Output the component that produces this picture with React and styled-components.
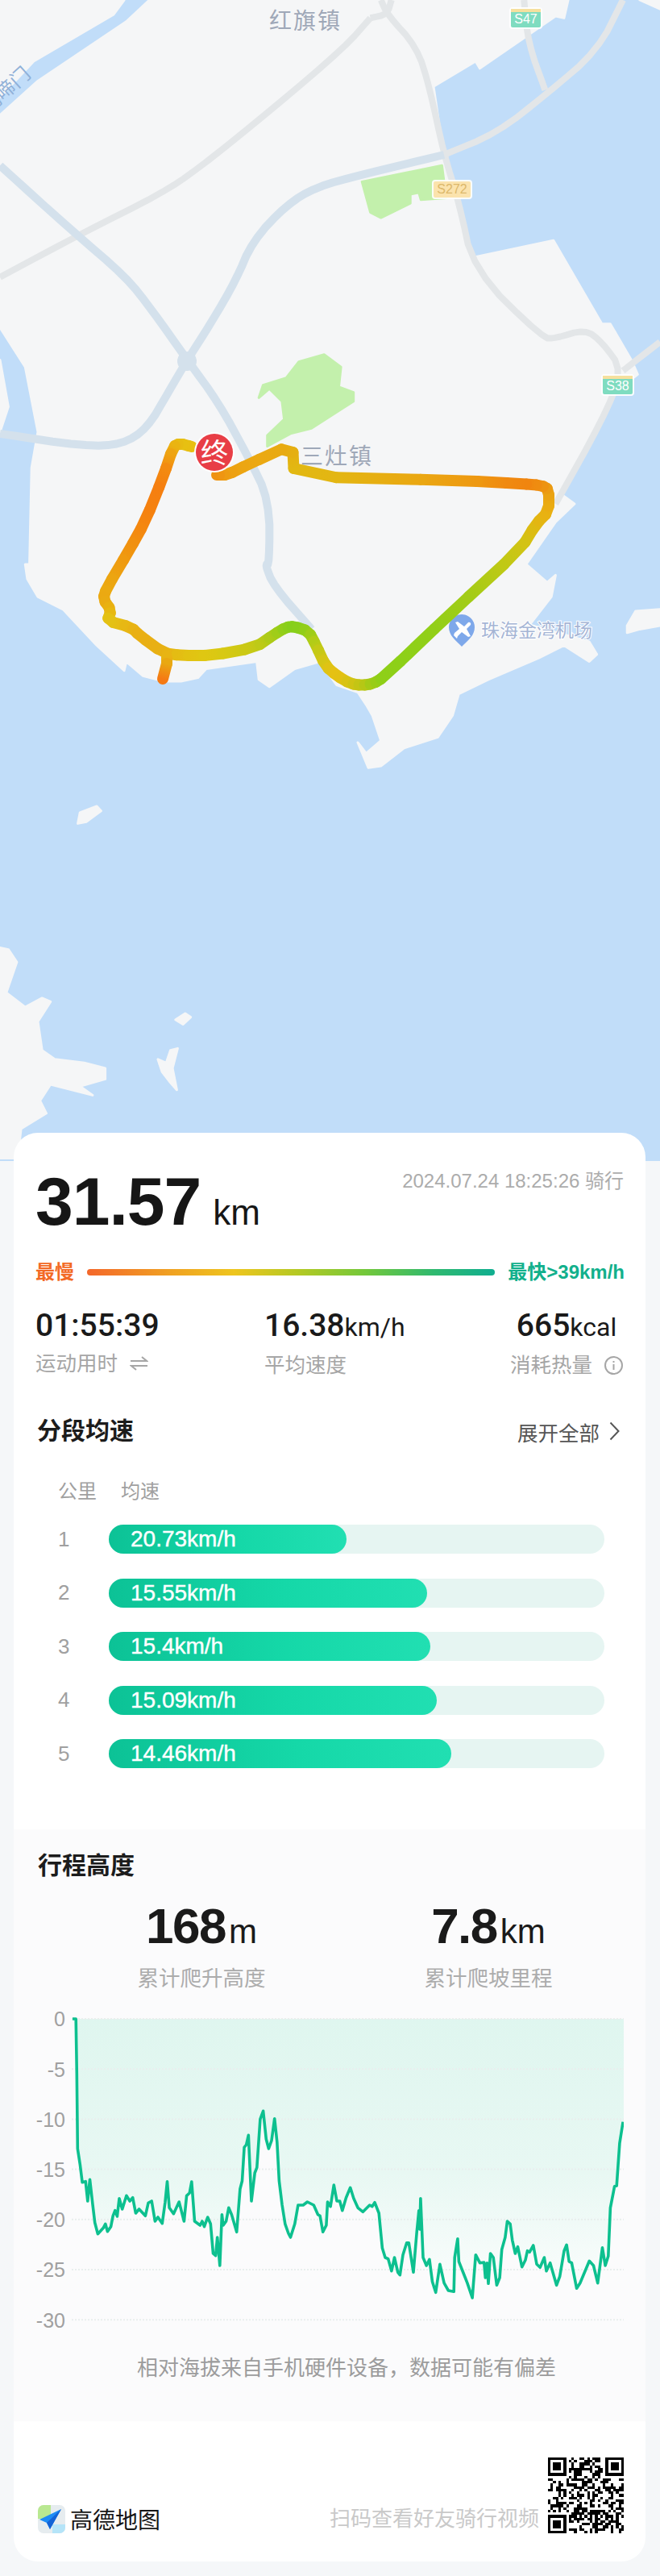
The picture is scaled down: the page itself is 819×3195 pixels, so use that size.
import styled, { createGlobalStyle } from 'styled-components';

const sans = '"Liberation Sans", "Noto Sans CJK SC", sans-serif';

// traced points come from crops of the reference, so they keep the crop scale here
const top = (pts) => pts.map(([x, y]) => [x * 0.5223, y * 0.4464]);
const low = (pts) => pts.map(([x, y]) => [x * 0.5223, 700 + y * 0.4464]);
const toPoints = (pts) => pts.map(([x, y]) => `${x.toFixed(1)},${y.toFixed(1)}`).join(' ');

const blend = (a, b, t) => {
  const ch = (hex, i) => parseInt(hex.slice(1 + i * 2, 3 + i * 2), 16);
  const out = [0, 1, 2].map((i) => Math.round(ch(a, i) + (ch(b, i) - ch(a, i)) * t).toString(16).padStart(2, '0'));
  return `#${out.join('')}`;
};

// corner cutting, so the traced lines read as curves
const smooth = (pts, rounds = 1) => {
  let line = pts;
  for (let r = 0; r < rounds; r++) {
    const next = [line[0]];
    for (let i = 0; i < line.length - 1; i++) {
      const a = line[i];
      const b = line[i + 1];
      [0.25, 0.75].forEach((t) => {
        const p = [a[0] + (b[0] - a[0]) * t, a[1] + (b[1] - a[1]) * t];
        if (a[2]) p.push(blend(a[2], b[2], t));
        next.push(p);
      });
    }
    next.push(line[line.length - 1]);
    line = next;
  }
  return line;
};

const mainland = [
  ...top([[355, 0], [1350, 0], [1340, 50], [1320, 45], [1140, 190], [1130, 170], [1030, 240], [1035, 280], [1055, 440], [1085, 560], [1125, 715], [1315, 668], [1430, 900], [1450, 900], [1500, 1000], [1515, 1040], [1450, 1100], [1430, 1170], [1330, 1370], [1365, 1400], [1320, 1450], [1250, 1568]]),
  ...low([[1250, 0], [1300, 50], [1320, 30], [1310, 90], [1258, 168], [1400, 215], [1418, 250], [1400, 270], [1340, 225], [1280, 260], [1160, 320], [1090, 360], [1075, 420], [1040, 480], [960, 510], [905, 560], [875, 565], [850, 495], [870, 525], [905, 490], [885, 420], [870, 390], [850, 355], [800, 335], [760, 270], [700, 290], [640, 340], [615, 320], [610, 270], [490, 290], [470, 315], [430, 325], [390, 325], [340, 310], [300, 270], [295, 295], [230, 225], [150, 125], [90, 90], [65, 40], [60, 0]]),
  ...top([[70, 1568], [75, 1300], [90, 1200], [60, 1020], [0, 910], [0, 320], [90, 225], [300, 60]]),
];

const otherLand = [
  top([[0, 0], [295, 0], [270, 40], [80, 170], [0, 270]]),
  top([[1520, 0], [1568, 0], [1568, 25]]),
  top([[0, 1000], [20, 1130], [0, 1200]]),
  low([[1490, 170], [1510, 130], [1568, 125], [1568, 170], [1520, 180], [1490, 190]]),
  low([[185, 720], [190, 690], [230, 672], [240, 685], [205, 715]]),
  low([[417, 1265], [440, 1248], [453, 1258], [435, 1278]]),
  low([[375, 1375], [395, 1385], [405, 1350], [422, 1345], [410, 1400], [420, 1460], [405, 1440], [385, 1410]]),
  low([[0, 1065], [20, 1070], [40, 1105], [15, 1190], [60, 1230], [100, 1205], [120, 1215], [90, 1270], [100, 1350], [130, 1375], [200, 1385], [250, 1400], [250, 1430], [190, 1450], [220, 1475], [120, 1445], [95, 1490], [110, 1525], [50, 1568], [42, 1650], [0, 1650]]),
];

const parks = [
  top([[860, 505], [1050, 460], [1060, 550], [1000, 555], [995, 535], [975, 540], [975, 565], [905, 605], [880, 590]]),
  top([[615, 1105], [625, 1070], [680, 1050], [710, 1005], [770, 985], [810, 1020], [805, 1075], [840, 1090], [840, 1115], [740, 1190], [690, 1205], [635, 1240], [635, 1210], [675, 1165], [670, 1115], [640, 1080]]),
];

const greyRoads = [
  top([[880, 50], [820, 130], [650, 300], [470, 470], [380, 540], [200, 645], [0, 770]]),
  top([[905, 0], [920, 40], [990, 130], [1020, 240], [1055, 430], [1090, 560], [1125, 750], [1290, 940], [1320, 940], [1390, 915], [1430, 950], [1480, 1030], [1430, 1170], [1320, 1400]]),
  top([[1055, 430], [1180, 370], [1300, 260], [1420, 140], [1480, 0]]),
  top([[1245, 0], [1255, 120], [1295, 250]]),
  top([[1480, 1030], [1568, 950]]),
  top([[930, 0], [920, 40], [880, 50]]),
];

const blueRoads = [
  [...top([[0, 460], [170, 640], [300, 770], [360, 860], [445, 1000], [520, 1120], [590, 1270], [640, 1390], [640, 1568]]), ...low([[630, 0], [650, 60], [740, 180]])],
  top([[1055, 430], [860, 485], [750, 520], [680, 570], [600, 670], [560, 780], [500, 900], [445, 1000], [400, 1090], [350, 1190], [290, 1235], [200, 1240], [0, 1205]]),
];

const route = smooth([
  [238, 554, '#e8bf10'], [223, 550, '#e6c012'], [215, 554, '#ebb012'], [203, 590, '#f57e10'], [180, 647, '#f5820f'],
  [160, 683, '#f0950f'], [132, 730, '#ebaa12'], [128, 743, '#eba812'], [138, 757, '#e8b410'], [133, 770, '#e3c514'],
  [163, 778, '#e8b414'], [173, 788, '#e9ae14'], [203, 810, '#e8b014'], [225, 813, '#e3c012'], [263, 813, '#dec912'],
  [317, 803, '#c6c916'], [340, 787, '#a6cc18'], [355, 778, '#8dcf1a'], [365, 777, '#83cf1a'], [383, 783, '#95ce18'],
  [392, 800, '#bccb16'], [404, 826, '#dcc414'], [418, 838, '#e8c012'], [435, 848, '#d4c414'], [449, 850, '#bfc514'],
  [463, 848, '#9ccc16'], [476, 840, '#8ad018'], [560, 760, '#94ce18'], [647, 680, '#cfc714'], [665, 650, '#e0b812'],
  [681, 634, '#eab012'], [681, 607, '#ea9f12'], [672, 602, '#ee8f10'], [647, 600, '#f1820f'], [574, 596, '#ed9f12'],
  [365, 591, '#e0bd12'], [363, 551, '#e7aa12'], [308, 576, '#eca812'], [282, 589, '#ed9f12'], [269, 589, '#ef9212'],
]);

const stub = [[207, 815, '#e8b414'], [207, 823, '#e9a812'], [202, 842, '#f57a14']];

const elevation = [
  [172, 97], [180, 97], [182, 300], [184, 580], [190, 640], [195, 705], [203, 702], [208, 775], [213, 695], [220, 790], [225, 855], [232, 897], [245, 875], [250, 860], [255, 888], [263, 870], [268, 830], [273, 810], [278, 832], [283, 765], [290, 805], [300, 755], [308, 775], [315, 762], [322, 820], [330, 805], [345, 830], [352, 782], [360, 775], [368, 850], [375, 835], [385, 858], [392, 780], [397, 702], [402, 800], [412, 822], [425, 778], [437, 850], [443, 755], [450, 745], [455, 703], [462, 850], [475, 865], [480, 850], [485, 870], [493, 835], [500, 860], [506, 970], [512, 978], [516, 910], [522, 1015], [527, 825], [530, 865], [537, 850], [543, 800], [550, 825], [562, 890], [570, 730], [575, 700], [580, 575], [585, 565], [590, 530], [597, 775], [605, 670], [610, 650], [618, 470], [625, 440], [632, 545], [638, 580], [645, 550], [652, 468], [658, 555], [663, 700], [670, 790], [677, 860], [685, 895], [690, 910], [700, 860], [708, 790], [720, 790], [730, 778], [745, 790], [755, 825], [760, 830], [767, 890], [775, 865], [778, 778], [785, 795], [793, 715], [800, 775], [807, 775], [813, 810], [822, 762], [832, 725], [840, 765], [850, 800], [862, 815], [878, 790], [884, 795], [890, 780], [900, 820], [908, 950], [915, 985], [922, 990], [930, 1035], [937, 985], [945, 1040], [950, 1050], [957, 975], [966, 930], [971, 930], [982, 1040], [990, 890], [995, 810], [997, 880], [999, 765], [1005, 985], [1013, 1015], [1020, 992], [1027, 1075], [1035, 1115], [1045, 1010], [1055, 1080], [1065, 1108], [1078, 1112], [1080, 985], [1087, 915], [1090, 1000], [1105, 1060], [1110, 1080], [1122, 1135], [1130, 975], [1140, 1005], [1150, 1003], [1153, 1060], [1157, 1005], [1160, 1082], [1165, 970], [1172, 985], [1180, 1088], [1187, 1060], [1192, 955], [1200, 910], [1205, 850], [1212, 860], [1217, 920], [1224, 970], [1230, 945], [1240, 1020], [1248, 995], [1253, 960], [1258, 965], [1267, 940], [1275, 1010], [1283, 1022], [1293, 985], [1298, 1035], [1307, 1005], [1322, 1088], [1330, 1055], [1340, 960], [1346, 938], [1352, 1000], [1358, 1005], [1370, 1100], [1378, 1080], [1400, 998], [1410, 1015], [1420, 1080], [1431, 948], [1438, 1015], [1445, 980], [1450, 800], [1460, 720], [1465, 718], [1472, 560], [1480, 480],
].map(([x, y]) => [(x - 170) / 1.915, (y - 97) / 3 + 4]);

const segments = [
  { km: 1, speed: '20.73km/h', width: 295 },
  { km: 2, speed: '15.55km/h', width: 395 },
  { km: 3, speed: '15.4km/h', width: 399 },
  { km: 4, speed: '15.09km/h', width: 407 },
  { km: 5, speed: '14.46km/h', width: 425 },
];

const axis = ['0', '-5', '-10', '-15', '-20', '-25', '-30'];

const GlobalStyle = createGlobalStyle`
  html, body {
    margin: 0;
    background: #f5f7f9;
    font-family: ${sans};
  }
`;

const Page = styled.div`
  width: 819px;
  padding-bottom: 18px;
  background: #f5f7f9;
`;

const MapPane = styled.div`
  height: 1440px;
  background: #c1ddf9;

  svg {
    display: block;
  }
`;

const Card = styled.main`
  position: relative;
  margin: -35px 18px 0 17px;
  border-radius: 30px;
  background: #fff;
  overflow: hidden;
`;

const Head = styled.header`
  display: flex;
  justify-content: space-between;
  align-items: flex-start;
  height: 90px;
  padding: 40px 27px 0;
`;

const Distance = styled.div`
  display: flex;
  align-items: baseline;
  line-height: 90px;
  font-size: 84px;
  font-weight: 700;
  color: #161616;
  letter-spacing: -1px;
`;

const DistanceUnit = styled.span`
  margin-left: 15px;
  font-size: 44px;
  font-weight: 400;
  letter-spacing: 0;
`;

const DateLine = styled.div`
  margin-top: 8px;
  line-height: 24px;
  font-size: 24px;
  color: #acacac;
`;

const Legend = styled.div`
  display: flex;
  align-items: center;
  height: 24px;
  margin-top: 31px;
  padding: 0 26px 0 27px;
`;

const LegendLabel = styled.span`
  font-size: 24px;
  line-height: 24px;
  font-weight: ${(p) => (p.$bold ? 700 : 400)};
  color: ${(p) => p.$color};
  white-space: nowrap;
`;

const SpeedScale = styled.div`
  flex: 1;
  height: 8px;
  margin: 0 16px;
  border-radius: 4px;
  background: linear-gradient(90deg, #f4672a 0%, #f0a022 20%, #eec51e 36%, #b3c924 52%, #74c83a 68%, #2fb96f 85%, #10ae90 100%);
`;

const Stats = styled.section`
  display: grid;
  grid-template-columns: 284px 304px 142px;
  margin-top: 38px;
  padding-left: 27px;
`;

const Stat = styled.div`
  display: flex;
  flex-direction: column;
  align-items: ${(p) => (p.$center ? 'center' : 'flex-start')};
`;

const StatValue = styled.div`
  line-height: 32px;
  font-family: Roboto, ${sans};
  font-size: 39px;
  font-weight: 500;
  color: #1a1a1a;
  white-space: nowrap;
`;

const StatUnit = styled.span`
  font-size: 32px;
  font-weight: 400;
`;

const StatLabel = styled.div`
  display: flex;
  align-items: center;
  gap: 15px;
  margin-top: 17px;
  line-height: 28px;
  font-size: 25.5px;
  color: #a6a6a6;
  white-space: nowrap;
`;

const SectionHead = styled.div`
  display: flex;
  justify-content: space-between;
  align-items: center;
  height: 40px;
  margin-top: 48px;
  padding: 0 32px 0 29px;
`;

const SectionTitle = styled.h2`
  margin: 0;
  line-height: 40px;
  font-size: 30px;
  font-weight: 700;
  color: #1c1c1c;
`;

const ExpandLink = styled.div`
  display: flex;
  align-items: center;
  gap: 12px;
  font-size: 25.5px;
  color: #555;
`;

const TableHead = styled.div`
  display: flex;
  gap: 30px;
  margin-top: 41px;
  padding-left: 55px;
  line-height: 28px;
  font-size: 24px;
  color: #a0a0a0;
`;

const SplitList = styled.div`
  display: flex;
  flex-direction: column;
  gap: 30.6px;
  margin-top: 27px;
  padding-left: 55px;
`;

const SplitRow = styled.div`
  display: flex;
  align-items: center;
  height: 36px;
`;

const SplitKm = styled.span`
  width: 63px;
  font-size: 26px;
  color: #a0a0a0;
`;

const Track = styled.div`
  width: 615px;
  height: 36px;
  border-radius: 18px;
  background: #e6f5f2;
`;

const Fill = styled.div`
  width: ${(p) => p.$width}px;
  height: 36px;
  box-sizing: border-box;
  padding-left: 27px;
  border-radius: 18px;
  background: linear-gradient(90deg, #0cc296, #15d8a8 55%, #21dfb2);
  line-height: 36px;
  font-size: 28px;
  color: #fff;
  -webkit-text-stroke: 0.4px #fff;
`;

const ElevationPanel = styled.section`
  margin-top: 76px;
  padding: 25px 0 51px;
  background: #fbfbfc;
`;

const PanelTitle = styled(SectionTitle)`
  padding-left: 30px;
`;

const ClimbGrid = styled.div`
  display: grid;
  grid-template-columns: 356px 356px;
  margin-top: 25px;
  padding-left: 55px;
`;

const Climb = styled.div`
  display: flex;
  flex-direction: column;
  align-items: center;
`;

const ClimbValue = styled.div`
  line-height: 60px;
  font-size: 62px;
  font-weight: 700;
  color: #1a1a1a;
  letter-spacing: -1.5px;
  white-space: nowrap;
`;

const ClimbUnit = styled.span`
  margin-left: 4px;
  font-size: 42px;
  font-weight: 400;
  letter-spacing: 0;
`;

const ClimbLabel = styled.div`
  margin-top: 13px;
  line-height: 30px;
  font-size: 26.5px;
  color: #acacac;
`;

const ChartRow = styled.div`
  display: flex;
  align-items: flex-start;
  margin-top: 31px;

  svg {
    display: block;
  }
`;

const AxisColumn = styled.div`
  width: 64px;
  margin: -27px 8px -30px 0;
  text-align: right;
`;

const AxisLabel = styled.div`
  height: 62.2px;
  line-height: 62.2px;
  font-size: 25px;
  color: #a0a0a0;
`;

const Caption = styled.p`
  margin: 37px 0 0;
  padding-left: 42px;
  text-align: center;
  line-height: 30px;
  font-size: 26px;
  color: #9c9c9c;
`;

const Footer = styled.footer`
  display: flex;
  justify-content: space-between;
  align-items: flex-end;
  height: 174px;
  box-sizing: border-box;
  padding: 0 27px 35px 30px;
`;

const Brand = styled.div`
  display: flex;
  align-items: center;
  gap: 6px;
`;

const BrandName = styled.span`
  font-family: "Noto Sans CJK SC", sans-serif;
  font-size: 28px;
  line-height: 35px;
  color: #161616;
`;

const ShareBox = styled.div`
  display: flex;
  align-items: flex-end;
  gap: 11px;
`;

const ShareText = styled.span`
  margin-bottom: 4px;
  line-height: 28px;
  font-size: 26px;
  color: #c9c9c9;
`;

const RouteLine = () => (
  <>
    {[route, stub].map((line, i) => (
      <g key={i}>
        <defs>
          {line.slice(1).map(([x, y, color], n) => (
            <linearGradient key={n} id={`leg-${i}-${n}`} gradientUnits="userSpaceOnUse" x1={line[n][0]} y1={line[n][1]} x2={x + 0.01} y2={y + 0.01}>
              <stop offset="0" stopColor={line[n][2]} />
              <stop offset="1" stopColor={color} />
            </linearGradient>
          ))}
        </defs>
        {line.slice(1).map(([x, y], n) => (
          <line key={n} x1={line[n][0]} y1={line[n][1]} x2={x + 0.01} y2={y + 0.01} stroke={`url(#leg-${i}-${n})`} strokeWidth="14" strokeLinecap="round" />
        ))}
      </g>
    ))}
  </>
);

const Shield = ({ x, y, w, h, label, fill, ink, strip }) => (
  <g>
    <rect x={x} y={y} width={w} height={h} rx="4" fill="#fff" opacity="0.9" />
    <rect x={x + 2} y={y + 2} width={w - 4} height={h - 4} rx="2" fill={fill} />
    {strip && <rect x={x + 2} y={y + 2} width={w - 4} height="4" fill={strip} />}
    <text x={x + w / 2} y={y + h - 7} textAnchor="middle" fontSize="16" fill={ink} fontFamily={sans}>{label}</text>
  </g>
);

const MapDrawing = () => (
  <svg width="819" height="1440" viewBox="0 0 819 1440" fontFamily={sans}>
    <polygon points={toPoints(mainland)} fill="#f5f6f7" stroke="#f5f6f7" strokeWidth="3" strokeLinejoin="round" />
    {otherLand.map((pts, i) => <polygon key={i} points={toPoints(pts)} fill="#f5f6f7" stroke="#f5f6f7" strokeWidth="3" strokeLinejoin="round" />)}
    {parks.map((pts, i) => <polygon key={i} points={toPoints(pts)} fill="#c3f0ac" stroke="#c3f0ac" strokeWidth="3" strokeLinejoin="round" />)}
    {greyRoads.map((pts, i) => <polyline key={i} points={toPoints(smooth(pts, 2))} fill="none" stroke="#e3e6e8" strokeWidth="8" strokeLinejoin="round" />)}
    {blueRoads.map((pts, i) => <polyline key={i} points={toPoints(smooth(pts, 2))} fill="none" stroke="#d4e1ec" strokeWidth="10" strokeLinejoin="round" />)}
    <circle cx="232" cy="448" r="12" fill="#d4e1ec" />

    <text x="334" y="36" fontSize="28" letterSpacing="2" fill="#9fa8b8">红旗镇</text>
    <text x="373" y="576" fontSize="28" letterSpacing="2" fill="#9fa8b8">三灶镇</text>
    <text x="0" y="0" fontSize="24" fill="#8fb0d8" transform="translate(-14 142) rotate(-42)">鸡啼门</text>

    <Shield x={632} y={9} w={41} h={27} label="S47" fill="#7fdcc0" ink="#fff" strip="#f5e09e" />
    <Shield x={536} y={223} w={50} h={24} label="S272" fill="#fbe3ad" ink="#dcb86a" />
    <Shield x={746} y={464} w={41} h={27} label="S38" fill="#7fdcc0" ink="#fff" strip="#f5e09e" />

    <path d="M573 802 C565 794 557 788 557 778 a16 16 0 0 1 32 0 C589 788 581 794 573 802Z" fill="#7ea8ea" />
    <path d="M564 785 l6 -5 -5 -8 3 -1 8 6 5 -5 c2 -1 4 1 3 3 l-5 5 5 9 -3 1 -8 -6 -5 5 -1 3 -2 -2 -2 -2Z" fill="#fff" />
    <text x="597" y="790" fontSize="23" fill="#a5b5d5" stroke="#fff" strokeWidth="2" paintOrder="stroke">珠海金湾机场</text>

    <RouteLine />

    <circle cx="266" cy="561" r="25" fill="#fff" />
    <circle cx="266" cy="561" r="23" fill="#e83e46" />
    <text x="266" y="574" textAnchor="middle" fontSize="34" fill="#fff" fontFamily='"Noto Sans CJK SC", sans-serif'>终</text>
  </svg>
);

const SwapIcon = () => (
  <svg width="23" height="18" viewBox="0 0 23 18" fill="none" stroke="#a6a6a6" strokeWidth="2">
    <path d="M1 6h20l-6-5" />
    <path d="M22 12H2l6 5" />
  </svg>
);

const InfoIcon = () => (
  <svg width="23" height="23" viewBox="0 0 23 23" fill="none" stroke="#a6a6a6" strokeWidth="2">
    <circle cx="11.5" cy="11.5" r="10.5" />
    <path d="M11.5 10v7" />
    <path d="M11.5 6v2" />
  </svg>
);

const ChevronIcon = () => (
  <svg width="13" height="24" viewBox="0 0 13 24" fill="none" stroke="#555" strokeWidth="2">
    <path d="M1.5 1.5 11.5 12 1.5 22.5" />
  </svg>
);

const ElevationChart = () => {
  const last = elevation[elevation.length - 1];
  const area = [[elevation[0][0], 4], ...elevation, [685, last[1]], [685, 4]];
  return (
    <svg width="685" height="385" viewBox="0 0 685 385">
      <defs>
        <linearGradient id="climb-fill" x1="0" y1="0" x2="0" y2="1">
          <stop offset="0" stopColor="#dff6ef" />
          <stop offset="0.55" stopColor="#e8f8f3" />
          <stop offset="1" stopColor="#fcfdfd" />
        </linearGradient>
      </defs>
      <polygon points={toPoints(area)} fill="url(#climb-fill)" />
      {axis.map((_, i) => (
        <line key={i} x1="0" x2="685" y1={4 + i * 62.2} y2={4 + i * 62.2} stroke="#e9eeed" strokeWidth="2" strokeDasharray="2 2" />
      ))}
      <polyline points={toPoints(elevation)} fill="none" stroke="#0dc08f" strokeWidth="3.6" strokeLinejoin="round" />
    </svg>
  );
};

const BrandMark = () => (
  <svg width="34" height="35" viewBox="0 0 34 35">
    <rect width="34" height="35" rx="7" fill="#e6ecef" />
    <path d="M7 0h9v17H0V7a7 7 0 0 1 7-7Z" fill="#b9e891" />
    <path d="M18 24h16v4a7 7 0 0 1-7 7h-9Z" fill="#b5e4f8" />
    <path d="M29 5 2 18l9 4 4 8Z" fill="#1e8cf5" />
    <path d="M29 5 11 22l4 8Z" fill="#1363d6" />
  </svg>
);

// the modules of the code can't be read from the blurred shot, so the body is just a fixed pattern
const qrSize = 29;
const isFinder = (x, y) => (x < 8 && y < 8) || (x > qrSize - 9 && y < 8) || (x < 8 && y > qrSize - 9);
const qrBody = () => {
  const cells = [];
  let seed = 20240724;
  for (let y = 0; y < qrSize; y++) {
    for (let x = 0; x < qrSize; x++) {
      seed = (seed * 1103515245 + 12345) % 2147483648;
      if (!isFinder(x, y) && seed % 1000 > 480) cells.push(`M${x} ${y}h1v1h-1z`);
    }
  }
  return cells.join('');
};

const Finder = ({ x, y }) => (
  <path d={`M${x} ${y}h7v7h-7zM${x + 1} ${y + 1}v5h5v-5zM${x + 2} ${y + 2}h3v3h-3z`} fillRule="evenodd" fill="#000" />
);

const QrCode = () => (
  <svg width="94" height="94" viewBox={`0 0 ${qrSize} ${qrSize}`} shapeRendering="crispEdges">
    <rect width={qrSize} height={qrSize} fill="#fff" />
    <path d={qrBody()} fill="#000" />
    <Finder x={0} y={0} />
    <Finder x={qrSize - 7} y={0} />
    <Finder x={0} y={qrSize - 7} />
  </svg>
);

const App = () => (
  <Page>
    <GlobalStyle />
    <MapPane>
      <MapDrawing />
    </MapPane>
    <Card>
      <Head>
        <Distance>31.57<DistanceUnit>km</DistanceUnit></Distance>
        <DateLine>2024.07.24 18:25:26 骑行</DateLine>
      </Head>

      <Legend>
        <LegendLabel $color="#f36a25" $bold>最慢</LegendLabel>
        <SpeedScale />
        <LegendLabel $color="#12b08c" $bold>最快&gt;39km/h</LegendLabel>
      </Legend>

      <Stats>
        <Stat>
          <StatValue>01:55:39</StatValue>
          <StatLabel>运动用时 <SwapIcon /></StatLabel>
        </Stat>
        <Stat>
          <StatValue>16.38<StatUnit>km/h</StatUnit></StatValue>
          <StatLabel>平均速度</StatLabel>
        </Stat>
        <Stat $center>
          <StatValue>665<StatUnit>kcal</StatUnit></StatValue>
          <StatLabel>消耗热量 <InfoIcon /></StatLabel>
        </Stat>
      </Stats>

      <SectionHead>
        <SectionTitle>分段均速</SectionTitle>
        <ExpandLink>展开全部 <ChevronIcon /></ExpandLink>
      </SectionHead>

      <TableHead>
        <span>公里</span>
        <span>均速</span>
      </TableHead>
      <SplitList>
        {segments.map((s) => (
          <SplitRow key={s.km}>
            <SplitKm>{s.km}</SplitKm>
            <Track>
              <Fill $width={s.width}>{s.speed}</Fill>
            </Track>
          </SplitRow>
        ))}
      </SplitList>

      <ElevationPanel>
        <PanelTitle>行程高度</PanelTitle>
        <ClimbGrid>
          <Climb>
            <ClimbValue>168<ClimbUnit>m</ClimbUnit></ClimbValue>
            <ClimbLabel>累计爬升高度</ClimbLabel>
          </Climb>
          <Climb>
            <ClimbValue>7.8<ClimbUnit>km</ClimbUnit></ClimbValue>
            <ClimbLabel>累计爬坡里程</ClimbLabel>
          </Climb>
        </ClimbGrid>
        <ChartRow>
          <AxisColumn>
            {axis.map((a) => <AxisLabel key={a}>{a}</AxisLabel>)}
          </AxisColumn>
          <ElevationChart />
        </ChartRow>
        <Caption>相对海拔来自手机硬件设备，数据可能有偏差</Caption>
      </ElevationPanel>

      <Footer>
        <Brand>
          <BrandMark />
          <BrandName>高德地图</BrandName>
        </Brand>
        <ShareBox>
          <ShareText>扫码查看好友骑行视频</ShareText>
          <QrCode />
        </ShareBox>
      </Footer>
    </Card>
  </Page>
);

export default App;
